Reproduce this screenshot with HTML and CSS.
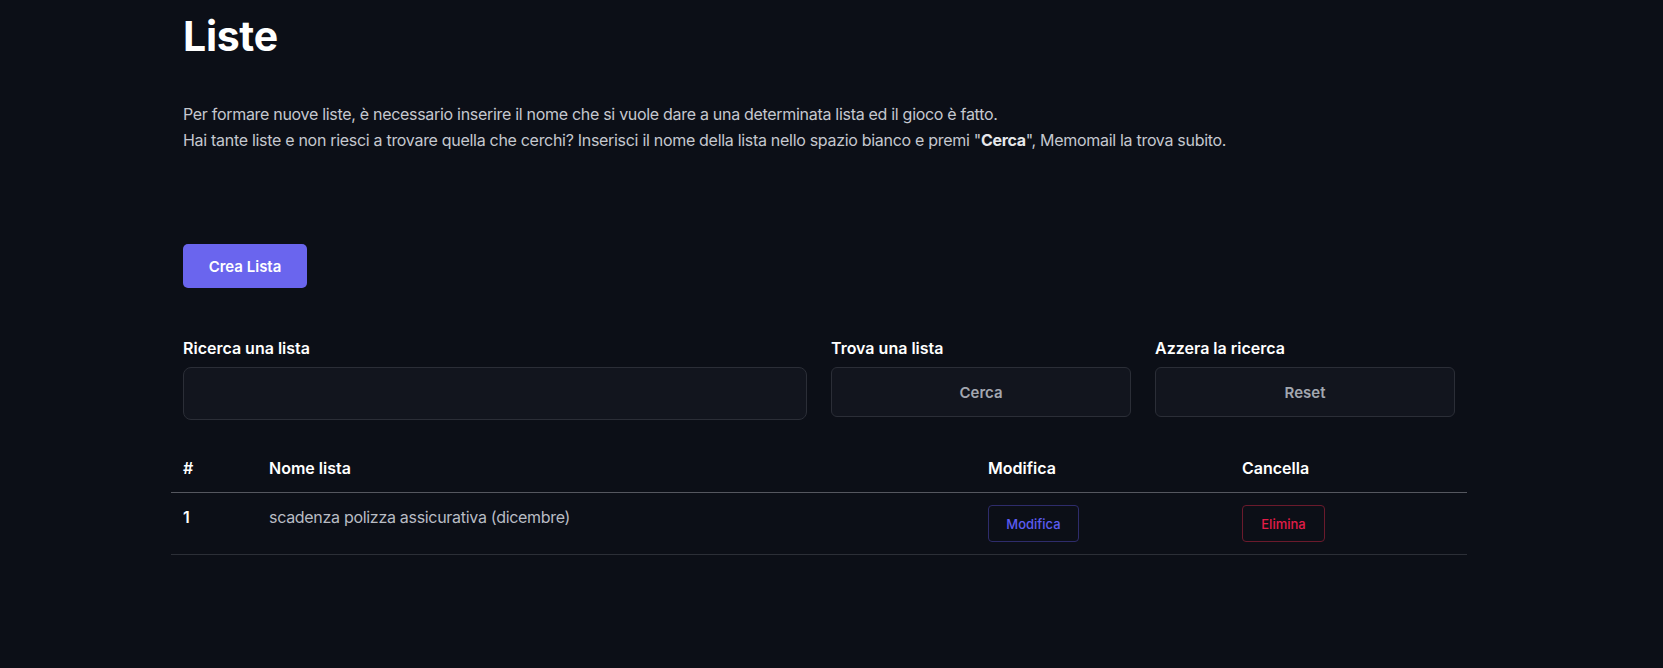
FILE: index.html
```html
<!DOCTYPE html>
<html lang="it">
<head>
    <meta charset="UTF-8">
    <title>Liste</title>
    <link rel="stylesheet" href="styles.css">
</head>
<body>
<div class="page">
    <div class="intro">
        <h1 class="title">Liste</h1>
        <p class="desc">
            Per formare nuove liste, è necessario inserire il nome che si vuole dare a una determinata lista ed il gioco è fatto.<br>
            Hai tante liste e non riesci a trovare quella che cerchi? Inserisci il nome della lista nello spazio bianco e premi "<b>Cerca</b>", Memomail la trova subito.
        </p>
        <button class="btn-primary">Crea Lista</button>
    </div>

    <div class="filters">
        <div class="field">
            <label class="label" for="search">Ricerca una lista</label>
            <input class="input" id="search" type="text">
        </div>
        <div class="field">
            <span class="label">Trova una lista</span>
            <button class="btn-dark">Cerca</button>
        </div>
        <div class="field">
            <span class="label">Azzera la ricerca</span>
            <button class="btn-dark">Reset</button>
        </div>
    </div>

    <table class="lists">
        <thead>
            <tr>
                <th class="c-num">#</th>
                <th class="c-name">Nome lista</th>
                <th class="c-edit">Modifica</th>
                <th class="c-del">Cancella</th>
            </tr>
        </thead>
        <tbody>
            <tr>
                <td class="num">1</td>
                <td class="name">scadenza polizza assicurativa (dicembre)</td>
                <td><button class="btn-outline edit">Modifica</button></td>
                <td><button class="btn-outline del">Elimina</button></td>
            </tr>
        </tbody>
    </table>
</div>
</body>
</html>
```

FILE: styles.css
```css
* {
    margin: 0;
    padding: 0;
    box-sizing: border-box;
}

body {
    background: #0c0f17;
    color: #c5c8cf;
    font-family: Inter, "Noto Sans", sans-serif;
    font-size: 16px;
}

.page {
    width: 1296px;
    margin-left: 171px;
}

.intro {
    padding: 0 12px;
}

.title {
    margin-top: 12px;
    font-size: 41px;
    line-height: 48px;
    font-weight: 700;
    color: #fff;
    letter-spacing: -0.3px;
}

.desc {
    margin-top: 41px;
    line-height: 26px;
    font-size: 16px;
    letter-spacing: -0.3px;
    color: #c5c8cf;
}

.desc b {
    color: #e6e7ea;
    font-weight: 700;
}

.btn-primary {
    margin-top: 91px;
    height: 44px;
    width: 124px;
    border: none;
    border-radius: 5px;
    background: #6a65ee;
    color: #fff;
    font-family: inherit;
    font-size: 15px;
    font-weight: 600;
}

/* riga con ricerca + pulsanti */
.filters {
    margin-top: 48px;
    display: grid;
    grid-template-columns: 6fr 3fr 3fr;
    align-items: start;
}

.field {
    padding: 0 12px;
    display: flex;
    flex-direction: column;
}

.label {
    display: block;
    line-height: 24px;
    font-size: 16px;
    font-weight: 600;
    color: #fff;
    margin-bottom: 7px;
}

.input {
    height: 53px;
    border: 1px solid #2b2e37;
    border-radius: 8px;
    background: #12151e;
    color: #fff;
    font-family: inherit;
    font-size: 16px;
    padding: 0 14px;
    outline: none;
}

.btn-dark {
    height: 50px;
    border: 1px solid #2b2e37;
    border-radius: 6px;
    background: #12151e;
    color: #a3a7b0;
    font-family: inherit;
    font-size: 15px;
    font-weight: 600;
}

/* tabella */
.lists {
    margin-top: 24px;
    width: 100%;
    border-collapse: collapse;
}

.lists th {
    text-align: left;
    padding: 12px;
    line-height: 24px;
    font-size: 16px;
    font-weight: 600;
    color: #fff;
    border-bottom: 1px solid #55575f;
}

.c-num { width: 86px; }
.c-name { width: 719px; }
.c-edit { width: 254px; }

.lists td {
    vertical-align: top;
    padding: 12px;
    line-height: 24px;
    border-bottom: 1px solid #2c2f37;
}

.lists td.num {
    color: #fff;
    font-weight: 600;
}

.lists td.name {
    color: #b9bcc4;
    letter-spacing: -0.3px;
}

.btn-outline {
    height: 37px;
    padding: 0 16px;
    border-radius: 4px;
    background: transparent;
    font-family: inherit;
    font-size: 13px;
    font-weight: 500;
}

.btn-outline.edit {
    width: 91px;
    color: #5d5cf2;
    border: 1px solid #2e2c6b;
}

.btn-outline.del {
    width: 83px;
    color: #e11d48;
    border: 1px solid #6a1a2c;
}
```
